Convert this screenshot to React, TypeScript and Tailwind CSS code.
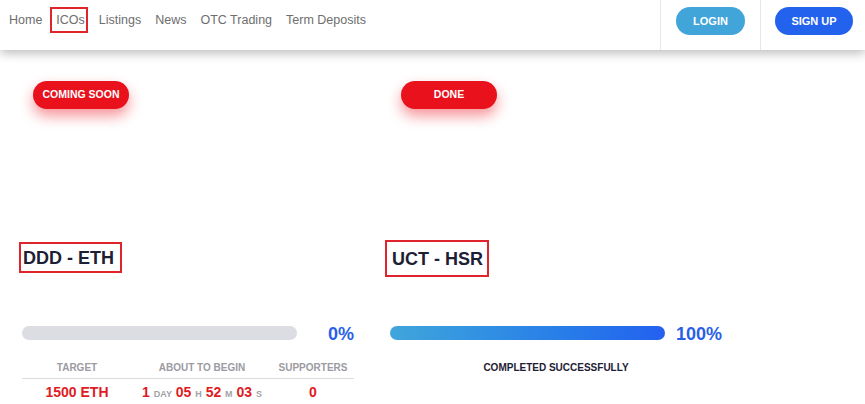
import React from "react";

const font = { fontFamily: '"Liberation Sans", Arial, sans-serif' };

function Header() {
  const items = ["Home", "ICOs", "Listings", "News", "OTC Trading", "Term Deposits"];
  return (
    <div className="relative z-10 flex h-[50px] items-stretch bg-white shadow-[0_3px_10px_rgba(0,0,0,0.28)]">
      <nav className="flex flex-1 items-start gap-[14px] pl-[9px] pt-[12px] text-[12.5px] text-[#6e6e6e]">
        {items.map((t) => (
          <span key={t} className="relative leading-[16px]">
            {t}
            {t === "ICOs" && (
              <span className="absolute -left-[6px] -right-[3px] -top-[5px] -bottom-[5px] border-2 border-[#e0242b]" />
            )}
          </span>
        ))}
      </nav>
      <div className="flex items-start border-l border-[#e3e8ee] px-[15px] pt-[7px]">
        <button className="h-[28px] w-[69px] rounded-full bg-[#41a5da] text-[11px] font-bold text-white">
          LOGIN
        </button>
      </div>
      <div className="flex items-start border-l border-[#e3e8ee] pl-[14px] pr-[12px] pt-[7px]">
        <button className="h-[28px] w-[78px] rounded-full bg-[#2362ec] text-[11px] font-bold text-white">
          SIGN UP
        </button>
      </div>
    </div>
  );
}

function Pill({ label }: { label: string }) {
  return (
    <div className="ml-[11px] flex h-[28px] w-[96px] items-center justify-center rounded-full bg-[#e8111c] text-[10.5px] font-bold text-white shadow-[0_7px_14px_rgba(235,20,30,0.45)]">
      {label}
    </div>
  );
}

function Bar({ pct, done }: { pct: string; done?: boolean }) {
  return (
    <div className="flex items-center">
      <div
        className={
          done
            ? "h-[14px] flex-1 rounded-full bg-gradient-to-r from-[#40a6da] to-[#2460ef]"
            : "h-[14px] flex-1 rounded-full bg-[#dcdde2]"
        }
      />
      <div className="w-[57px] pt-[2px] text-right text-[18px] font-semibold leading-[18px] text-[#2a5fe8]">
        {pct}
      </div>
    </div>
  );
}

export default function App() {
  return (
    <div className="h-[404px] w-[865px] overflow-hidden bg-white" style={font}>
      <Header />
      <div className="flex">
        {/* Left column */}
        <div className="flex w-[368px] flex-col pl-[22px] pr-[14px]">
          <div className="mt-[31px]">
            <Pill label="COMING SOON" />
          </div>
          <div className="mt-[133px] flex h-[31px]">
            <div className="-ml-[3px] flex items-center border-2 border-[#e0242b] pl-[2px] pr-[6px] pt-[2px] text-[18px] font-bold text-[#1d2033]">
              DDD - ETH
            </div>
          </div>
          <div className="mt-[50px]">
            <Bar pct="0%" />
          </div>
          <div className="mt-[19px] grid grid-cols-[110px_140px_82px] border-b border-[#d9dbe0] pb-[4px] text-center text-[10px] font-semibold leading-[12px] text-[#9b9ba2]">
            <div>TARGET</div>
            <div>ABOUT TO BEGIN</div>
            <div>SUPPORTERS</div>
          </div>
          <div className="mt-[4px] grid grid-cols-[110px_140px_82px] text-center text-[14px] font-bold leading-[18px] text-[#e01b24]">
            <div>1500 ETH</div>
            <div className="whitespace-nowrap">
              1 <span className="text-[9px] font-semibold text-[#a2a2a8]">DAY</span> 05{" "}
              <span className="text-[9px] font-semibold text-[#a2a2a8]">H</span> 52{" "}
              <span className="text-[9px] font-semibold text-[#a2a2a8]">M</span> 03{" "}
              <span className="text-[9px] font-semibold text-[#a2a2a8]">S</span>
            </div>
            <div>0</div>
          </div>
        </div>
        {/* Right column */}
        <div className="flex w-[368px] flex-col pl-[22px] pr-[14px]">
          <div className="mt-[31px]">
            <Pill label="DONE" />
          </div>
          <div className="mt-[131px] flex h-[37px]">
            <div className="-ml-[5px] flex items-center border-2 border-[#e0242b] pl-[5px] pr-[4px] pt-[2px] text-[18px] font-bold text-[#1d2033]">
              UCT - HSR
            </div>
          </div>
          <div className="mt-[46px]">
            <Bar pct="100%" done />
          </div>
          <div className="mt-[19px] text-center text-[10px] font-bold leading-[12px] text-[#1d2033]">
            COMPLETED SUCCESSFULLY
          </div>
        </div>
      </div>
    </div>
  );
}
